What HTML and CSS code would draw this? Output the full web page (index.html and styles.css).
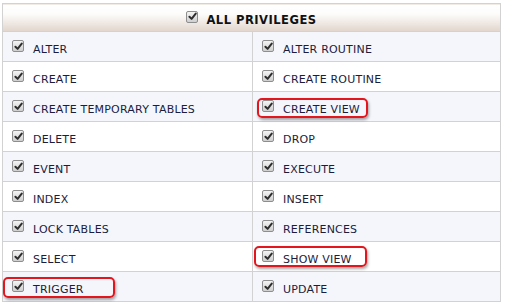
FILE: index.html
```html
<!DOCTYPE html>
<html>
<head>
    <title>Privileges</title>
    <link rel="stylesheet" href="styles.css">
</head>
<body>
    <table class="priv">
        <colgroup>
            <col class="col-left">
            <col class="col-right">
        </colgroup>
        <thead>
            <tr>
                <th colspan="2">
                    <label class="item head-item"><span class="cb"><svg viewBox="0 0 10 10"><path d="M1.6 5.2 L4 7.6 L8.6 1.8"/></svg></span><span>ALL PRIVILEGES</span></label>
                </th>
            </tr>
        </thead>
        <tbody>
            <tr>
                <td><label class="item"><span class="cb"><svg viewBox="0 0 10 10"><path d="M1.6 5.2 L4 7.6 L8.6 1.8"/></svg></span><span>ALTER</span></label></td>
                <td><label class="item"><span class="cb"><svg viewBox="0 0 10 10"><path d="M1.6 5.2 L4 7.6 L8.6 1.8"/></svg></span><span>ALTER ROUTINE</span></label></td>
            </tr>
            <tr>
                <td><label class="item"><span class="cb"><svg viewBox="0 0 10 10"><path d="M1.6 5.2 L4 7.6 L8.6 1.8"/></svg></span><span>CREATE</span></label></td>
                <td><label class="item"><span class="cb"><svg viewBox="0 0 10 10"><path d="M1.6 5.2 L4 7.6 L8.6 1.8"/></svg></span><span>CREATE ROUTINE</span></label></td>
            </tr>
            <tr>
                <td><label class="item"><span class="cb"><svg viewBox="0 0 10 10"><path d="M1.6 5.2 L4 7.6 L8.6 1.8"/></svg></span><span>CREATE TEMPORARY TABLES</span></label></td>
                <td><label class="item"><span class="cb"><svg viewBox="0 0 10 10"><path d="M1.6 5.2 L4 7.6 L8.6 1.8"/></svg></span><span>CREATE VIEW</span></label><span class="mark mark-cv"></span></td>
            </tr>
            <tr>
                <td><label class="item"><span class="cb"><svg viewBox="0 0 10 10"><path d="M1.6 5.2 L4 7.6 L8.6 1.8"/></svg></span><span>DELETE</span></label></td>
                <td><label class="item"><span class="cb"><svg viewBox="0 0 10 10"><path d="M1.6 5.2 L4 7.6 L8.6 1.8"/></svg></span><span>DROP</span></label></td>
            </tr>
            <tr>
                <td><label class="item"><span class="cb"><svg viewBox="0 0 10 10"><path d="M1.6 5.2 L4 7.6 L8.6 1.8"/></svg></span><span>EVENT</span></label></td>
                <td><label class="item"><span class="cb"><svg viewBox="0 0 10 10"><path d="M1.6 5.2 L4 7.6 L8.6 1.8"/></svg></span><span>EXECUTE</span></label></td>
            </tr>
            <tr>
                <td><label class="item"><span class="cb"><svg viewBox="0 0 10 10"><path d="M1.6 5.2 L4 7.6 L8.6 1.8"/></svg></span><span>INDEX</span></label></td>
                <td><label class="item"><span class="cb"><svg viewBox="0 0 10 10"><path d="M1.6 5.2 L4 7.6 L8.6 1.8"/></svg></span><span>INSERT</span></label></td>
            </tr>
            <tr>
                <td><label class="item"><span class="cb"><svg viewBox="0 0 10 10"><path d="M1.6 5.2 L4 7.6 L8.6 1.8"/></svg></span><span>LOCK TABLES</span></label></td>
                <td><label class="item"><span class="cb"><svg viewBox="0 0 10 10"><path d="M1.6 5.2 L4 7.6 L8.6 1.8"/></svg></span><span>REFERENCES</span></label></td>
            </tr>
            <tr>
                <td><label class="item"><span class="cb"><svg viewBox="0 0 10 10"><path d="M1.6 5.2 L4 7.6 L8.6 1.8"/></svg></span><span>SELECT</span></label></td>
                <td><label class="item"><span class="cb"><svg viewBox="0 0 10 10"><path d="M1.6 5.2 L4 7.6 L8.6 1.8"/></svg></span><span>SHOW VIEW</span></label><span class="mark mark-sv"></span></td>
            </tr>
            <tr>
                <td><label class="item"><span class="cb"><svg viewBox="0 0 10 10"><path d="M1.6 5.2 L4 7.6 L8.6 1.8"/></svg></span><span>TRIGGER</span></label><span class="mark mark-tr"></span></td>
                <td><label class="item"><span class="cb"><svg viewBox="0 0 10 10"><path d="M1.6 5.2 L4 7.6 L8.6 1.8"/></svg></span><span>UPDATE</span></label></td>
            </tr>
        </tbody>
    </table>
</body>
</html>
```

FILE: styles.css
```css
body {
    margin: 3px 0 0 2px;
    background: #fff;
    font-family: "DejaVu Sans", Verdana, sans-serif;
    color: #1c1c3c;
}

.priv {
    width: 499px;
    table-layout: fixed;
    border-collapse: collapse;
    border: 1px solid #d2d2d2;
}

.col-left {
    width: 250px;
}

.priv th {
    height: 25px;
    padding: 2px 0 0 0;
    background: linear-gradient(to bottom, #ffffff 0%, #fdfcfb 35%, #e2d5cc 100%);
    border-bottom: 1px solid #d2d2d2;
    font-size: 11.5px;
    font-weight: bold;
    letter-spacing: 0.5px;
    color: #111;
}

.priv td {
    position: relative;
    height: 26px;
    padding: 3px 0 0 9px;
    border: 1px solid #d2d2d2;
    font-size: 11px;
    letter-spacing: 0.2px;
}

.priv tbody tr:nth-child(odd) td {
    background: #f5f6fc;
}

.item {
    display: flex;
    align-items: flex-start;
    gap: 9px;
}

.item span:last-child {
    padding-top: 3px;
}

.head-item {
    justify-content: center;
    gap: 8px;
}

.head-item span:last-child {
    padding-top: 2px;
}

.cb {
    flex: none;
    width: 12px;
    height: 12px;
    box-sizing: border-box;
    border: 1px solid #8e8e8e;
    border-radius: 2px;
    background: linear-gradient(to bottom, #f4f4f4, #cfcfcf);
    display: flex;
    align-items: center;
    justify-content: center;
}

.cb svg {
    width: 9px;
    height: 9px;
}

.cb path {
    fill: none;
    stroke: #2e2e2e;
    stroke-width: 2.2;
    stroke-linecap: round;
    stroke-linejoin: round;
}

/* red highlight boxes drawn over the cells */
.mark {
    position: absolute;
    box-sizing: border-box;
    border: 2px solid #e3161e;
    border-radius: 5px;
    box-shadow: 1px 2px 3px rgba(0, 0, 0, 0.35);
}

.mark-cv {
    left: 4px;
    top: 6px;
    width: 111px;
    height: 20px;
}

.mark-sv {
    left: 1px;
    top: 4px;
    width: 113px;
    height: 21px;
}

.mark-tr {
    left: 0;
    top: 5px;
    width: 112px;
    height: 21px;
}
```
